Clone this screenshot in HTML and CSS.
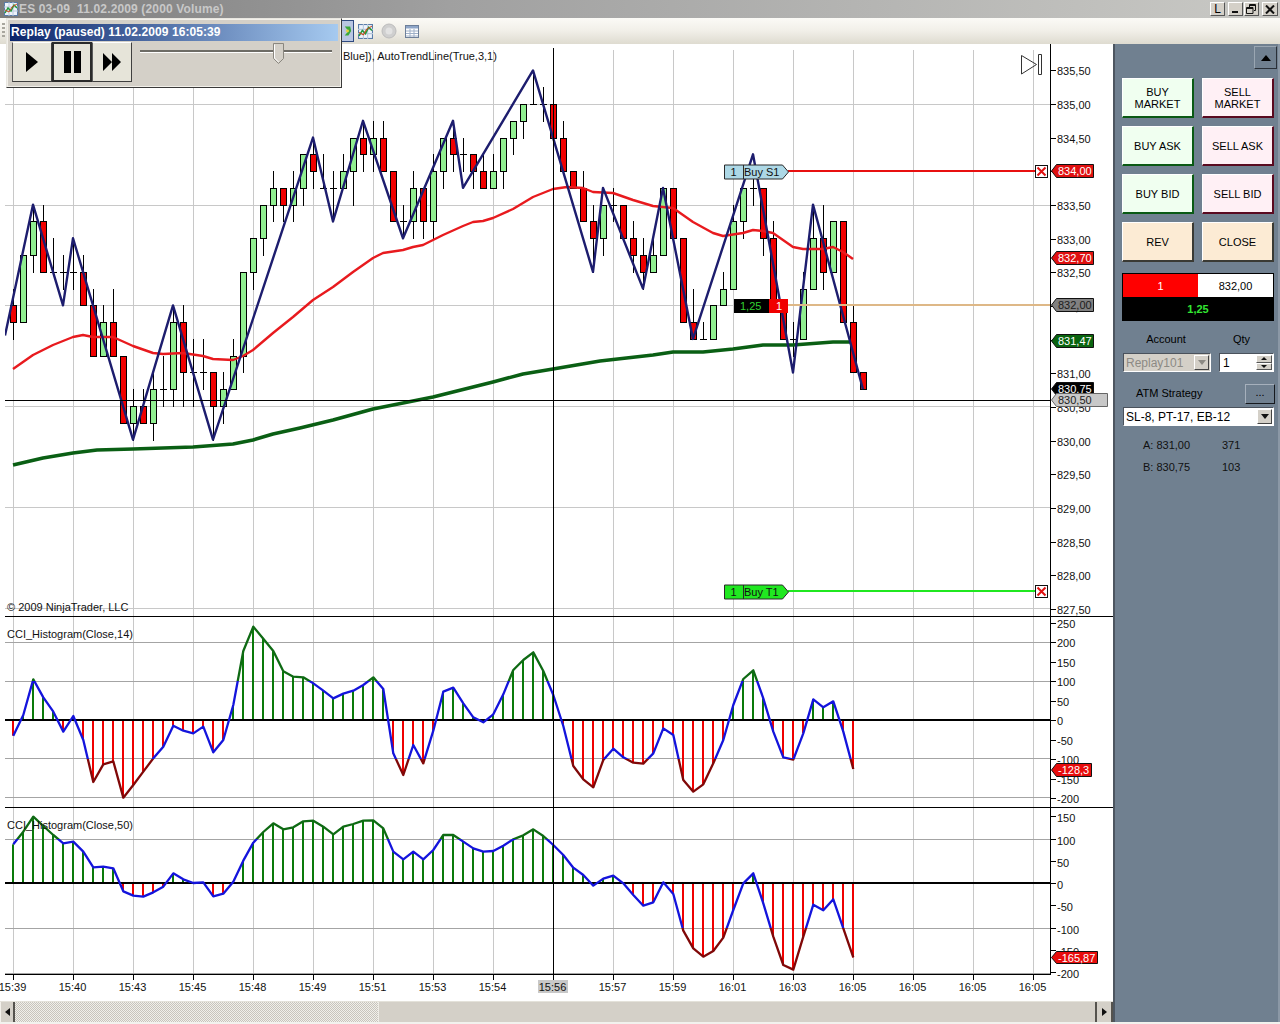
FILE: index.html
```html
<!DOCTYPE html>
<html lang="en">
<head>
<meta charset="utf-8">
<title>ES 03-09 Chart</title>
<link rel="stylesheet" href="styles.css">
</head>
<body>
<svg class="defs" width="0" height="0" aria-hidden="true">
  <symbol id="chart-icon" viewBox="0 0 14 14">
    <rect x="0.5" y="0.5" width="13" height="13" fill="#eef3fb" stroke="#5a7ca8"/>
    <path d="M0 5H14M0 9H14M5 0V14M9 0V14" stroke="#b8c8dc" fill="none"/>
    <path d="M1 11L4 6L7 9L10 3L13 6" stroke="#1f9a3a" stroke-width="1.4" fill="none"/>
    <path d="M1 8L5 10L8 5L13 2" stroke="#c84a20" fill="none"/>
  </symbol>
</svg>
<div class="window">
  <header class="titlebar">
    <svg class="title-icon" width="14" height="14"><use href="#chart-icon"/></svg>
    <span class="title-text">ES 03-09  11.02.2009 (2000 Volume)</span>
    <div class="win-buttons">
      <span class="win-btn win-l">L</span>
      <span class="win-btn win-gap"><svg width="9" height="9" viewBox="0 0 9 9"><rect x="1" y="6" width="6" height="2" fill="#111"/></svg></span>
      <span class="win-btn"><svg width="11" height="10" viewBox="0 0 11 10"><path d="M3.5 .5H9.5V6.5H8M3.5 .5V3M.5 3.5H7V9.5H.5Z M3.5 1.5H9.5 M.5 4.5H7" fill="none" stroke="#111"/></svg></span>
      <span class="win-btn win-gap2"><svg width="10" height="9" viewBox="0 0 10 9"><path d="M1 .5L9 8.5M9 .5L1 8.5" stroke="#111" stroke-width="2"/></svg></span>
    </div>
  </header>
  <div class="toolbar">
    <span class="grip"></span>
    <div class="tool-active">
      <svg width="12" height="14" viewBox="0 0 12 14"><path d="M3 2L9 2L10 7L7 12L3 12L7 7Z" fill="#3aa83a"/><circle cx="6" cy="7" r="1.6" fill="#ead23a"/></svg>
    </div>
    <svg class="tool-icon" width="15" height="15"><use href="#chart-icon"/></svg>
    <svg class="tool-icon" width="16" height="16" viewBox="0 0 16 16"><circle cx="8" cy="8" r="7" fill="#cfcfcf" stroke="#bcbcbc"/><circle cx="8" cy="8" r="3.5" fill="#e2e2e2"/></svg>
    <svg class="tool-icon" width="14" height="13" viewBox="0 0 14 13"><rect x=".5" y=".5" width="13" height="12" fill="#fff" stroke="#6d7f99"/><rect x="1" y="1" width="12" height="2.5" fill="#8fa6c8"/><path d="M1 6H13M1 8.500H13M1 11H13M5 4V12M9 4V12" stroke="#9fb0c8" fill="none"/></svg>
  </div>
  <div class="main">
    <div class="chart-col">
      <div class="chart" id="chart"></div>
      <div class="hscroll">
        <div class="scroll-btn"><svg width="5" height="8" viewBox="0 0 5 8"><path d="M5 0V8L0 4Z" fill="#111"/></svg></div>
        <div class="scroll-track"></div>
        <div class="scroll-thumb"></div>
        <div class="scroll-btn"><svg width="5" height="8" viewBox="0 0 5 8"><path d="M0 0V8L5 4Z" fill="#111"/></svg></div>
      </div>
    </div>
    <aside class="panel">
      <div class="panel-top"><button class="up-btn"><svg width="10" height="6" viewBox="0 0 10 6"><path d="M5 0L10 6H0Z" fill="#000"/></svg></button></div>
      <div class="order-grid">
        <div class="ord buy">BUY<br>MARKET</div>
        <div class="ord sell">SELL<br>MARKET</div>
        <div class="ord buy">BUY ASK</div>
        <div class="ord sell">SELL ASK</div>
        <div class="ord buy">BUY BID</div>
        <div class="ord sell">SELL BID</div>
        <div class="ord flat">REV</div>
        <div class="ord flat">CLOSE</div>
      </div>
      <div class="position">
        <div class="pos-top"><span class="pos-qty">1</span><span class="pos-price">832,00</span></div>
        <div class="pos-pnl">1,25</div>
      </div>
      <div class="labels"><span class="lab-account">Account</span><span class="lab-qty">Qty</span></div>
      <div class="acct-row">
        <div class="combo combo-acct"><span class="combo-val">Replay101</span><span class="combo-arrow dis"><svg width="8" height="5" viewBox="0 0 8 5"><path d="M0 0H8L4 5Z" fill="#8c8a84"/></svg></span></div>
        <div class="spin"><span class="spin-val">1</span><span class="spin-btns"><i><svg width="6" height="3" viewBox="0 0 6 3"><path d="M3 0L6 3H0Z" fill="#111"/></svg></i><i><svg width="6" height="3" viewBox="0 0 6 3"><path d="M0 0H6L3 3Z" fill="#111"/></svg></i></span></div>
      </div>
      <div class="atm-row"><span class="atm-label">ATM Strategy</span><button class="dots">...</button></div>
      <div class="combo combo-atm"><span class="combo-val">SL-8, PT-17, EB-12</span><span class="combo-arrow"><svg width="8" height="5" viewBox="0 0 8 5"><path d="M0 0H8L4 5Z" fill="#111"/></svg></span></div>
      <div class="quote quote-a"><span class="q-p">A: 831,00</span><span class="q-s">371</span></div>
      <div class="quote"><span class="q-p">B: 830,75</span><span class="q-s">103</span></div>
    </aside>
  </div>
</div>
<div class="replay">
  <div class="replay-title">Replay (paused) 11.02.2009 16:05:39</div>
  <div class="replay-body">
    <div class="rp-btn"><svg width="12" height="20" viewBox="0 0 12 20"><path d="M0 0L12 10L0 20Z" fill="#000"/></svg></div>
    <div class="rp-btn rp-pressed"><svg width="17" height="22" viewBox="0 0 17 22"><rect width="7" height="22" fill="#000"/><rect x="10" width="7" height="22" fill="#000"/></svg></div>
    <div class="rp-btn"><svg width="18" height="18" viewBox="0 0 18 18"><path d="M0 0L9 9L0 18ZM9 0L18 9L9 18Z" fill="#000"/></svg></div>
    <div class="slider">
      <div class="slider-track"></div>
      <svg class="slider-thumb" width="11" height="21" viewBox="0 0 11 21"><path d="M.5 .5H10.500V15.500L5.500 20.500L.5 15.500Z" fill="#d4d0c8" stroke="#8a877f"/><path d="M1.500 1.500V15L5.500 19" fill="none" stroke="#fff"/></svg>
    </div>
  </div>
</div>
<script src="chart.js"></script>
</body>
</html>
```
FILE: styles.css
```css
* { box-sizing: border-box; }
html, body { margin: 0; padding: 0; background: #f2f2ee; }
body { width: 1280px; height: 1024px; overflow: hidden; position: relative; font-family: "Liberation Sans", Arial, sans-serif; font-size: 11px; color: #000; }
.defs { position: absolute; }
.window { width: 1280px; height: 1022px; display: flex; flex-direction: column; }

.titlebar { height: 18px; flex: none; display: flex; align-items: center; padding-left: 4px; background: linear-gradient(90deg, #7c7c7c 0%, #a0a0a0 35%, #c9c9c5 100%); }
.title-icon { flex: none; margin-right: 1px; }
.title-text { font: bold 12px "Liberation Sans", Arial, sans-serif; color: #c8c8c8; white-space: pre; letter-spacing: 0.14px; }
.win-buttons { margin-left: auto; display: flex; align-items: center; padding-right: 2px; }
.win-btn { width: 15px; height: 14px; display: flex; align-items: center; justify-content: center; background: #d4d0c8; border: 1px solid; border-color: #fff #555 #555 #fff; font-size: 12px; }
.win-l { margin-right: 3px; }
.win-gap { margin-right: 1px; }
.win-gap2 { margin-left: 3px; width: 16px; }

.toolbar { height: 26px; flex: none; display: flex; align-items: center; padding-left: 2px; background: linear-gradient(180deg, #fbfaf6 0%, #f1efe8 50%, #dedbd0 100%); }
.grip { width: 3px; height: 16px; margin-right: 336px; background: repeating-linear-gradient(180deg, #a8a69e 0 2px, transparent 2px 4px); }
.tool-active { width: 13px; height: 22px; display: flex; align-items: center; justify-content: center; background: #b9c6e2; border: 1px solid #2f4a80; margin-right: 4px; }
.tool-icon { flex: none; margin-right: 8px; }

.main { flex: 1; display: flex; min-height: 0; }
.chart-col { width: 1113px; display: flex; flex-direction: column; }
.chart { height: 957px; background: #fff; }
.chart svg { display: block; }
.hscroll { flex: 1; display: flex; background: #f1efe8; border-top: 1px solid #e4e2da; }
.scroll-btn { width: 15px; background: #d4d0c8; display: flex; align-items: center; justify-content: center; border-left: 1px solid #f4f2ec; border-right: 2px solid #55534e; }
.scroll-btn:last-child { border-left: 2px solid #55534e; width: 18px; }
.scroll-track { width: 363px; background: repeating-conic-gradient(#c8c4bc 0 25%, #f0efea 0 50%) 0 0 / 2px 2px; }
.scroll-thumb { flex: 1; background: #d4d0c8; border-left: 1px solid #eeece6; }

.panel { flex: 1; background: #708090; border-left: 2px solid #4d5660; border-right: 2px solid #8b98a6; padding: 2px 4px 0 7px; }
.panel-top { display: flex; justify-content: flex-end; height: 23px; margin-right: -3px; }
.up-btn { width: 23px; height: 23px; padding: 0; display: flex; align-items: center; justify-content: center; background: #708090; border: 1px solid; border-color: #9aa6b2 #2a3038 #2a3038 #9aa6b2; }
.order-grid { margin-top: 9px; display: grid; grid-template-columns: 72px 72px; grid-auto-rows: 40px; column-gap: 8px; row-gap: 8px; }
.ord { display: flex; align-items: center; justify-content: center; text-align: center; line-height: 12px; font-size: 11px; border-style: solid; border-width: 1px 2px 2px 1px; color: #000; }
.buy { background: #f0fff0; border-color: #fff #0a5a14 #0a5a14 #fff; }
.sell { background: #fff0f5; border-color: #fff #5a0a20 #5a0a20 #fff; }
.flat { background: #fcebd4; border-color: #fff #3a3a34 #3a3a34 #fff; }

.position { margin-top: 11px; width: 152px; height: 48px; background: #000; border: 1px solid #000; display: flex; flex-direction: column; }
.pos-top { height: 23px; display: flex; }
.pos-qty { width: 75px; background: #f00; color: #fff; display: flex; align-items: center; justify-content: center; }
.pos-price { flex: 1; background: #fff; color: #000; display: flex; align-items: center; justify-content: center; }
.pos-pnl { flex: 1; display: flex; align-items: center; justify-content: center; color: #32e632; font-weight: bold; }

.labels { margin-top: 10px; height: 16px; display: flex; align-items: center; color: #000; }
.lab-account { width: 88px; text-align: center; }
.lab-qty { width: 55px; margin-left: 9px; margin-right: -6px; text-align: center; transform: translateX(-5px); }
.acct-row { margin-top: 6px; display: flex; margin-left: 1px; gap: 8px; }
.combo { display: flex; align-items: center; height: 19px; border: 1px solid; border-color: #4a525c #fff #fff #4a525c; padding: 1px; background: #fff; }
.combo-val { flex: 1; padding-left: 1px; font-size: 12px; line-height: 14px; }
.combo-arrow { width: 15px; height: 15px; flex: none; display: flex; align-items: center; justify-content: center; background: #d4d0c8; border: 1px solid; border-color: #fff #444 #444 #fff; }
.combo-acct { width: 88px; background: #d4d0c8; }
.combo-acct .combo-val { color: #8c8a84; }
.spin { width: 55px; height: 19px; background: #fff; display: flex; align-items: center; border: 1px solid; border-color: #4a525c #fff #fff #4a525c; padding: 1px; }
.spin-val { flex: 1; padding-left: 2px; font-size: 12px; }
.spin-btns { width: 16px; display: flex; flex-direction: column; height: 15px; }
.spin-btns i { flex: 1; display: flex; align-items: center; justify-content: center; background: #d4d0c8; border: 1px solid; border-color: #fff #555 #555 #fff; }
.atm-row { margin-top: 12px; height: 20px; display: flex; align-items: flex-start; justify-content: space-between; padding-left: 14px; margin-right: -1px; line-height: 18px; }
.dots { width: 30px; height: 20px; padding: 0 0 4px; font: 11px "Liberation Sans", Arial, sans-serif; color: #000; background: #708090; border: 1px solid; border-color: #a6b0bc #16191e #16191e #a6b0bc; }
.combo-atm { margin-top: 3px; margin-left: 1px; width: 151px; }
.quote { margin-top: 4px; height: 18px; display: flex; align-items: center; padding-left: 21px; color: #111; }
.quote-a { margin-top: 10px; }
.q-p { width: 79px; }

.replay { position: absolute; left: 6px; top: 18px; width: 336px; height: 70px; background: #d4d0c8; border: 1px solid; border-color: #e8e6e0 #3a3a3a #3a3a3a #e8e6e0; padding: 5px 3px 0 3px; box-shadow: inset 0 0 0 1px #f2f0ea; }
.replay-title { height: 17px; padding-left: 1px; font: bold 12px/16px "Liberation Sans", Arial, sans-serif; color: #fff; letter-spacing: .08px; background: linear-gradient(90deg, #0a246a 0%, #a6caf0 100%); }
.replay-body { display: flex; padding: 1px 0 0 2px; }
.rp-btn { width: 40px; height: 40px; flex: none; display: flex; align-items: center; justify-content: center; background: #e6e4d9; border: 1px solid; border-color: #fff #3f3f3f #3f3f3f #5a5a5a; }
.rp-pressed { border: 2px solid #2a2a2a; }
.slider { position: relative; flex: 1; }
.slider-track { position: absolute; left: 8px; right: 6px; top: 8px; height: 3px; background: #6e6c66; border-bottom: 1px solid #fff; }
.slider-thumb { position: absolute; left: 141px; top: 1px; }

.ax { font: 11px "Liberation Sans", Arial, sans-serif; fill: #111; }
.ax-mid { text-anchor: middle; }
.ax-white { fill: #fff; }
.ax-dark { fill: #1c1c1c; }
.ax-lime { fill: #32d232; }
```
FILE: chart.js
```js
(function () {
  var BX = function (i) { return 13 + 10 * i; };
  var PY = function (n) { return Math.round(104 + 16.78 * n); };
  // type, body top, body bottom, high, low (tick offsets below 835,00)
  var bars = [
    ['r',12,13,11,14],['g',9,13,9,13],['g',7,9,6,10],['r',7,10,6,10],['d',10,10,8,10],['d',10,10,9,11],['d',10,10,8,11],['r',10,12,9,12],
    ['r',12,15,11,15],['g',13,15,12,15],['r',13,15,11,15],['r',15,19,15,19],['g',18,19,17,20],['r',18,19,17,19],['g',17,19,16,20],['d',17,17,15,18],
    ['g',13,17,12,18],['r',13,16,12,18],['d',16,16,14,18],['d',16,16,14,17],['r',16,18,16,20],['g',17,18,16,19],['g',15,17,14,17],['g',10,15,10,16],
    ['g',8,10,8,11],['g',6,8,6,9],['g',5,6,4,7],['r',5,6,5,7],['g',5,6,4,7],['g',3,5,3,6],['r',3,4,2,5],['d',5,5,3,5],
    ['d',5,5,4,7],['g',4,5,3,5],['g',2,4,2,6],['r',2,3,1,4],['g',2,3,1,4],['r',2,4,1,4],['r',4,7,4,7],['d',7,7,6,8],
    ['g',5,7,4,8],['r',5,7,5,8],['g',4,7,3,8],['g',2,4,2,5],['r',2,3,1,4],['d',3,3,2,4],['r',3,4,3,5],['r',4,5,3,5],
    ['g',4,5,3,5],['g',2,4,2,5],['g',1,2,1,3],['g',0,1,0,2],['d',0,0,-2,0],['d',0,0,-1,1],['r',0,2,0,2],['r',2,4,1,4],
    ['r',4,5,4,5],['r',5,7,4,7],['r',7,8,6,10],['g',6,8,6,9],['d',6,6,5,7],['r',6,8,6,8],['r',8,9,7,10],['r',9,10,8,11],
    ['g',9,10,8,10],['g',5,9,5,9],['r',5,8,5,8],['r',8,13,8,13],['r',13,14,11,14],['d',14,14,13,14],['g',12,14,12,14],['g',11,12,10,12],
    ['g',7,11,6,11],['g',5,7,5,8],['d',5,5,4,6],['r',5,8,5,9],['r',8,12,7,12],['r',12,14,12,14],['d',14,14,13,15],['g',11,14,10,14],
    ['g',8,11,6,11],['r',8,10,6,11],['g',7,10,7,10],['r',7,13,7,13],['r',13,16,12,16],['r',16,17,16,17]
  ];
  var trend = [[5,13.8],[33,6],[63,12],[73,8],[133,20],[173,12],[213,20],[313,2],[333,7],[363,1],[403,8],[453,1],[463,5],[533,-2],[593,10],[603,5],[643,11],[663,5],[693,14],[753,3],[793,16],[813,6],[863,17]];
  var smaRed = [[13,369],[33,355],[53,345],[73,337],[83,335],[93,337],[113,337],[133,346],[153,353],[163,354],[183,353],[203,356],[213,359],[233,360],[243,356],[253,350],[273,333],[293,317],[313,300],[333,287],[353,272],[373,258],[383,253],[403,250],[413,247],[423,245],[443,235],[463,226],[473,222],[483,221],[493,218],[513,209],[533,197],[553,189],[567,187],[583,188],[593,192],[613,193],[633,200],[653,206],[673,208],[693,222],[713,233],[723,236],[743,233],[753,230],[763,231],[773,233],[793,247],[803,249],[823,249],[833,247],[843,252],[853,259]];
  var smaGreen = [[13,465],[43,458],[73,453],[97,450],[133,449],[193,447],[233,444],[253,440],[273,434],[300,428],[333,420],[373,409],[433,397],[493,382],[523,374],[553,369],[600,361],[653,355],[673,352],[703,352],[733,349],[763,345],[793,345],[833,342],[851,342]];
  var cci14 = [407,345,238,292,335,395,348,420,546,493,484,593,555,515,475,440,377,392,400,380,457,420,315,153,80,116,153,214,230,232,250,272,295,281,272,255,232,267,460,525,435,490,392,275,263,310,352,367,343,283,210,180,157,213,285,378,498,538,562,480,446,472,488,491,460,385,405,540,575,553,490,420,315,237,211,295,395,472,479,400,298,322,304,395,507];
  var cci50 = [133,95,50,78,105,130,125,155,202,200,205,274,287,290,277,260,220,238,249,247,289,281,245,182,128,96,70,88,82,64,62,80,103,80,72,62,61,85,155,178,155,178,150,105,105,125,145,155,153,137,118,106,88,108,135,165,203,225,257,236,227,250,285,317,307,247,282,392,445,470,453,413,330,250,220,310,410,495,509,410,314,331,298,385,472];
  var times = ['15:39','15:40','15:43','15:45','15:48','15:49','15:51','15:53','15:54','15:56','15:57','15:59','16:01','16:03','16:05','16:05','16:05','16:05'];

  var s = [];
  function line(x1, y1, x2, y2, c, w) { s.push('<line x1="'+x1+'" y1="'+y1+'" x2="'+x2+'" y2="'+y2+'" stroke="'+c+'" stroke-width="'+(w||1)+'"/>'); }
  function text(x, y, t, cls) { s.push('<text x="'+x+'" y="'+y+'" class="ax '+(cls||'')+'">'+t+'</text>'); }
  function poly(p, c, w) { s.push('<polyline points="'+p.map(function(a){return a.join(',');}).join(' ')+'" fill="none" stroke="'+c+'" stroke-width="'+w+'" stroke-linejoin="round"/>'); }
  function flag(y1, y2, x2, fill, stroke, label, cls) {
    var m = (y1+y2)/2;
    s.push('<path d="M1051.5 '+m+'L1056.5 '+y1+'H'+x2+'V'+y2+'H1056.5Z" fill="'+fill+'" stroke="'+stroke+'"/>');
    text(1058, m+4, label, cls);
  }
  function orderFlag(y, fill, q, label) {
    s.push('<path d="M724.5 '+(y-7)+'H782.5L788.5 '+y+'L782.5 '+(y+7)+'H724.5Z" fill="'+fill+'" stroke="#2a2a2a"/>');
    line(743.5, y-7, 743.5, y+7, '#2a2a2a');
    text(733.5, y+4, q, 'ax-mid');
    text(744, y+4, label);
  }
  function xBox(y) {
    s.push('<rect x="1035.500" y="'+(y-6)+'" width="12" height="12" fill="#fff" stroke="#111"/>');
    s.push('<path d="M1037.500 '+(y-4)+'L1045.500 '+(y+4)+'M1045.500 '+(y-4)+'L1037.500 '+(y+4)+'" stroke="#e01010" stroke-width="2"/>');
  }

  s.push('<defs>');
  s.push('<clipPath id="cp"><rect x="5" y="50" width="1045" height="566"/></clipPath>');
  [['a',616,681,759,807],['b',807,839,928,974]].forEach(function (c) {
    s.push('<clipPath id="'+c[0]+'-hi"><rect x="0" y="'+c[1]+'" width="1113" height="'+(c[2]-c[1])+'"/></clipPath>');
    s.push('<clipPath id="'+c[0]+'-mid"><rect x="0" y="'+c[2]+'" width="1113" height="'+(c[3]-c[2])+'"/></clipPath>');
    s.push('<clipPath id="'+c[0]+'-lo"><rect x="0" y="'+c[3]+'" width="1113" height="'+(c[4]-c[3])+'"/></clipPath>');
  });
  s.push('</defs>');

  // vertical grid
  for (var k = 0; k < 18; k++) line(13.5+60*k, 50, 13.5+60*k, 974, '#c8c8c8');
  // price grid
  [104,205,305,406,507,608].forEach(function (y) { line(5, y+.5, 1050, y+.5, '#c8c8c8'); });
  // cci grid
  [642,681,758,797,839,928].forEach(function (y) { line(5, y+.5, 1050, y+.5, '#a4a4a4'); });
  line(5, 973.500, 1050, 973.500, '#a4a4a4');

  // candles
  bars.forEach(function (b, i) {
    var x = BX(i) + .5, t = PY(b[1])+.5, e = PY(b[2])+.5, h = PY(b[3])+.5, l = PY(b[4])+.5;
    line(x, h-.5, x, l+.5, '#000');
    if (b[0] === 'd') { line(x-3.5, t, x+3.5, t, '#000'); return; }
    s.push('<rect x="'+(x-3)+'" y="'+t+'" width="6" height="'+(e-t)+'" fill="'+(b[0]==='g'?'#90ee90':'#f00000')+'" stroke="#000"/>');
  });
  s.push('<g clip-path="url(#cp)">');
  poly(smaGreen, '#0a5f14', 3.6);
  poly(smaRed, '#e81a1e', 2.4);
  poly(trend.map(function (p) { return [p[0], 104 + 16.78*p[1]]; }), '#1d1d6e', 2.4);
  s.push('</g>');

  // histograms
  function cci(vals, zero, base, id) {
    vals.forEach(function (z, i) {
      var y = base + z/3, x = BX(i) - 1;
      var top = Math.min(y, zero), hh = Math.abs(y-zero);
      s.push('<rect x="'+x+'" y="'+top+'" width="2" height="'+hh+'" fill="'+(y<zero?'#0a7a0a':'#f00000')+'"/>');
    });
    line(5, zero, 1050, zero, '#000', 2);
    var pts = vals.map(function (z, i) { return [BX(i)+.3, base + z/3]; });
    ['hi:#0f6a14','mid:#1414dc','lo:#800808'].forEach(function (d) {
      var p = d.split(':');
      s.push('<g clip-path="url(#'+id+'-'+p[0]+')">');
      poly(pts, p[1], 2.3);
      s.push('</g>');
    });
  }
  cci(cci14, 720, 600, 'a');
  cci(cci50, 883, 800, 'b');

  // crosshair and pane borders
  line(553.5, 48, 553.5, 980, '#000');
  line(5, 400.5, 1050, 400.5, '#000');
  line(5, 616.5, 1113, 616.5, '#000');
  line(5, 807.5, 1113, 807.5, '#000');
  line(5, 974.5, 1050, 974.5, '#000');
  line(1050.5, 44, 1050.5, 975, '#000');

  // price axis
  ['835,50','835,00','834,50','834,00','833,50','833,00','832,50','832,00','831,50','831,00','830,50','830,00','829,50','829,00','828,50','828,00','827,50'].forEach(function (t, i) {
    var y = Math.round(70.4 + 33.65*i);
    line(1051, y+.5, 1056, y+.5, '#000');
    text(1057, y+5, t);
  });
  [250,200,150,100,50,0,-50,-100,-150,-200].forEach(function (v) {
    var y = Math.round(720 - v*.39);
    line(1051, y+.5, 1056, y+.5, '#000');
    text(1057, y+5, String(v));
  });
  [150,100,50,0,-50,-100,-150,-200].forEach(function (v) {
    var y = Math.min(Math.round(883 - v*.445), 973);
    line(1051, y+.5, 1056, y+.5, '#000');
    text(1057, y+6, String(v));
  });

  // time axis
  s.push('<rect x="538" y="980" width="30" height="13" fill="#c8c8c8"/>');
  times.forEach(function (t, k) {
    var x = 13.5 + 60*k;
    line(x, 975, x, 980, '#000');
    text(x-1, 991, t, 'ax-mid');
  });

  // text labels
  text(343, 60, 'Blue]), AutoTrendLine(True,3,1)');
  text(7, 611, '\u00a9 2009 NinjaTrader, LLC');
  text(7, 638, 'CCI_Histogram(Close,14)');
  text(7, 829, 'CCI_Histogram(Close,50)');

  // orders
  line(788, 171, 1035, 171, '#e81010', 2);
  orderFlag(172, '#add8e6', '1', 'Buy S1');
  xBox(171.5);
  line(788, 591, 1035, 591, '#20e820', 2);
  orderFlag(592, '#20e820', '1', 'Buy T1');
  xBox(591.5);
  line(788, 305, 1050, 305, '#deb887', 2);
  s.push('<rect x="734" y="299" width="36" height="14" fill="#000"/><rect x="769" y="299" width="19" height="14" fill="#f00000"/>');
  text(740, 310, '1,25', 'ax-lime');
  text(776, 310, '1', 'ax-white');

  // axis flags
  flag(164.5, 177.5, 1093.5, '#e01010', '#111', '834,00', 'ax-white');
  flag(251.5, 264.5, 1093.5, '#e01010', '#111', '832,70', 'ax-white');
  flag(298.5, 311.5, 1093.5, '#808080', '#111', '832,00', 'ax-dark');
  flag(334.5, 347.5, 1093.5, '#0a640f', '#111', '831,47', 'ax-white');
  flag(382.5, 395.5, 1093.5, '#000', '#111', '830,75', 'ax-white');
  flag(393.5, 406.5, 1107.5, '#c8c8c8', '#666', '830,50', 'ax-dark');
  flag(763.5, 776.5, 1091.5, '#e80c0c', '#111', '-128,3', 'ax-white');
  flag(951.5, 963.5, 1097.5, '#e80c0c', '#111', '-165,87', 'ax-white');

  // end-of-chart marker
  s.push('<path d="M1021.500 55.500V74L1036.500 64.500Z M1038.500 54.500H1041.500V74.500H1038.500Z" fill="none" stroke="#333"/>');

  document.getElementById('chart').innerHTML =
    '<svg xmlns="http://www.w3.org/2000/svg" width="1113" height="957" viewBox="0 44 1113 957">' + s.join('') + '</svg>';
})();
```
